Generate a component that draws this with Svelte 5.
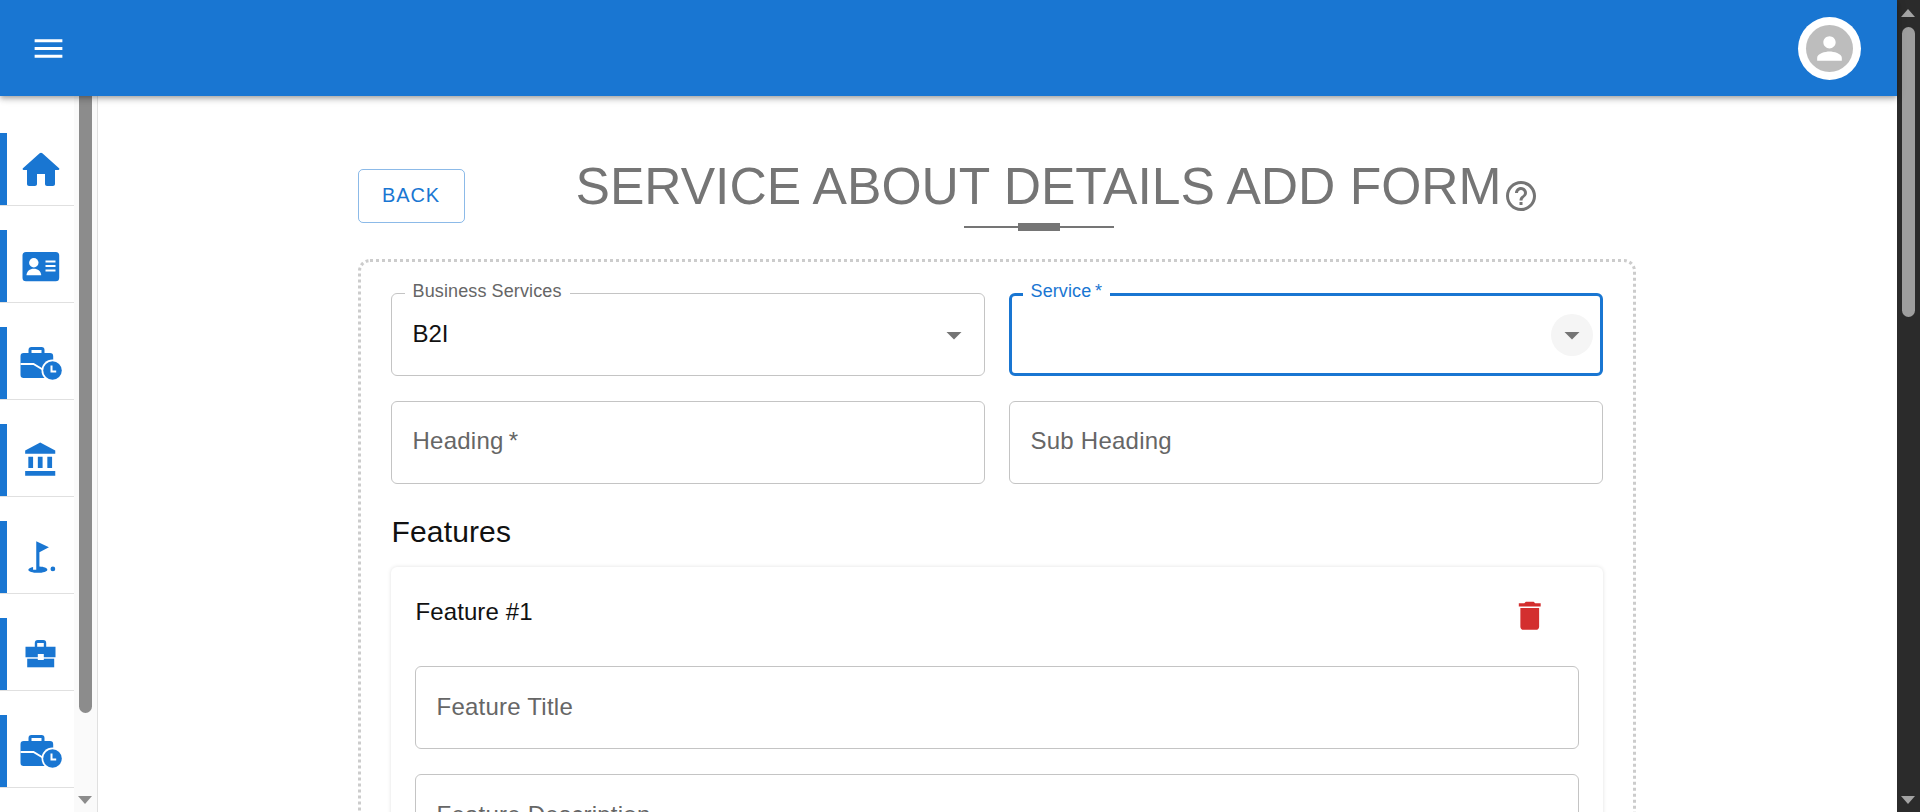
<script>
  const navIcons = ['home', 'card', 'clockcase', 'bank', 'golf', 'case', 'clockcase'];
</script>

<div class="page">
  <div class="viewport">
    <header class="appbar">
      <svg class="menu" viewBox="0 0 24 24"><path d="M3 18h18v-2H3v2zm0-5h18v-2H3v2zm0-7v2h18V6H3z" /></svg>
      <div class="avatar-ring">
        <div class="avatar">
          <svg viewBox="0 0 24 24"><path d="M12 12c2.21 0 4-1.79 4-4s-1.79-4-4-4-4 1.79-4 4 1.79 4 4 4zm0 2c-2.67 0-8 1.34-8 4v2h16v-2c0-2.66-5.33-4-8-4z" /></svg>
        </div>
      </div>
    </header>

    <div class="body">
      <aside class="sidebar">
        <nav class="nav">
          {#each navIcons as icon}
            <div class="nav-item">
              <div class="nav-icon">
                {#if icon === 'home'}
                  <svg class="s48 home" viewBox="0 0 24 24"><path d="M10 19v-5h4v5c0 .55.45 1 1 1h3c.55 0 1-.45 1-1v-7h1.7c.46 0 .68-.57.33-.87L12.67 3.6c-.38-.34-.96-.34-1.34 0l-8.36 7.53c-.34.3-.13.87.33.87H5v7c0 .55.45 1 1 1h3c.55 0 1-.45 1-1z" /></svg>
                {:else if icon === 'card'}
                  <svg class="s48" viewBox="0.5 0 48 48"><path d="M9.5 10h29.7a3.500 3.500 0 0 1 3.500 3.500v22.300a3.500 3.500 0 0 1-3.500 3.500H9.500A3.500 3.500 0 0 1 6 35.800V13.500A3.500 3.500 0 0 1 9.500 10z" /><circle cx="17.300" cy="20.700" r="4.700" fill="#fff" /><path fill="#fff" d="M10 33.200c0-3.800 3.300-6.500 7.300-6.500s7.400 2.700 7.400 6.500z" /><path fill="#fff" d="M29 18.500h10v2H29zM29 23h10v2H29zM29 27.500h10v2H29z" /></svg>
                {:else if icon === 'clockcase'}
                  <svg class="s48" viewBox="0.5 0 48 48"><path fill-rule="evenodd" d="M12 14v-3a3 3 0 0 1 3-3h10a3 3 0 0 1 3 3v3h5.500a3.200 3.200 0 0 1 3.200 3.200V39H7.200A3.200 3.200 0 0 1 4 35.800V17.200A3.200 3.200 0 0 1 7.200 14zM15 11v3h10v-3z" /><path fill="none" stroke="#fff" stroke-width="2" d="M4 25h13l10 6" /><circle cx="36" cy="31.500" r="11" fill="#fff" /><circle cx="36" cy="31.500" r="9.300" /><path fill="none" stroke="#fff" stroke-width="2" d="M35 26.500v6h4.700" /></svg>
                {:else if icon === 'bank'}
                  <svg class="s38" viewBox="0 0 24 24"><path d="M4 10v7h3v-7H4zm6 0v7h3v-7h-3zM2 22h19v-3H2v3zm14-12v7h3v-7h-3zm-4.500-9L2 6v2h19V6l-9.500-5z" /></svg>
                {:else if icon === 'golf'}
                  <svg class="s38" viewBox="0 0 24 24"><circle cx="19.500" cy="19.500" r="1.500" /><path d="M17 5.920 9 2v18H7v-1.730c-1.790.350-3 .990-3 1.730 0 1.100 2.690 2 6 2s6-.900 6-2c0-.990-2.160-1.810-5-1.970V8.980l6-3.060z" /></svg>
                {:else}
                  <svg class="s48" viewBox="0.5 0 48 48"><path fill-rule="evenodd" d="M18.300 16.700V13a3 3 0 0 1 3-3h5.400a3 3 0 0 1 3 3v3.700H39v10.600H9V16.700zM20.700 16.700h6.600V13h-6.600z" /><path d="M10.700 28.700h27v8.600h-27z" /><path fill="#fff" d="M21.300 24h6v6h-6z" /></svg>
                {/if}
              </div>
            </div>
          {/each}
        </nav>
        <div class="side-scroll">
          <div class="side-thumb"></div>
          <div class="arrow-down side-arrow"></div>
        </div>
      </aside>

      <main class="main">
        <div class="column">
          <div class="title-row">
            <button class="back">BACK</button>
            <div class="title-block">
              <h1>SERVICE ABOUT DETAILS ADD FORM</h1>
              <div class="rule"><span></span></div>
            </div>
            <svg class="help" viewBox="0 0 24 24"><path d="M11 18h2v-2h-2v2zm1-16C6.480 2 2 6.480 2 12s4.480 10 10 10 10-4.480 10-10S17.520 2 12 2zm0 18c-4.410 0-8-3.590-8-8s3.590-8 8-8 8 3.590 8 8-3.590 8-8 8zm0-14c-2.210 0-4 1.790-4 4h2c0-1.100.900-2 2-2s2 .900 2 2c0 2-3 1.750-3 5h2c0-2.250 3-2.500 3-5 0-2.210-1.790-4-4-4z" /></svg>
          </div>

          <section class="form">
            <div class="grid">
              <div class="field">
                <span class="label small">Business Services</span>
                <span class="value">B2I</span>
                <svg class="drop" viewBox="0 0 24 24"><path d="M7 10l5 5 5-5z" /></svg>
              </div>
              <div class="field focus">
                <span class="label small">Service&thinsp;*</span>
                <span class="pop"><svg class="drop-inner" viewBox="0 0 24 24"><path d="M7 10l5 5 5-5z" /></svg></span>
              </div>
              <div class="field"><span class="label raised">Heading&thinsp;*</span></div>
              <div class="field"><span class="label raised">Sub Heading</span></div>
            </div>

            <h2>Features</h2>

            <div class="card">
              <div class="card-head">
                <span class="card-title">Feature #1</span>
                <svg class="trash" viewBox="0 0 24 24"><path d="M6 19c0 1.100.900 2 2 2h8c1.100 0 2-.900 2-2V7H6v12zM19 4h-3.500l-1-1h-5l-1 1H5v2h14V4z" /></svg>
              </div>
              <div class="field"><span class="label">Feature Title</span></div>
              <div class="field tall"><span class="label">Feature Description</span></div>
            </div>
          </section>
        </div>
      </main>
    </div>
  </div>

  <div class="page-scroll">
    <div class="arrow-up"></div>
    <div class="page-thumb"></div>
    <div class="arrow-down page-arrow"></div>
  </div>
</div>

<style>
  :global(body) {
    margin: 0;
    background: #fff;
    font-family: "Liberation Sans", Arial, sans-serif;
  }
  .page {
    display: flex;
    height: 812px;
    overflow: hidden;
  }
  .viewport {
    flex: 1;
    min-width: 0;
    display: flex;
    flex-direction: column;
  }
  .appbar {
    position: relative;
    z-index: 2;
    flex: none;
    height: 96px;
    background: #1976d2;
    display: flex;
    align-items: center;
    justify-content: space-between;
    padding: 0 36px 0 30px;
    box-shadow: 0 2px 4px -1px rgba(0,0,0,.2), 0 4px 5px rgba(0,0,0,.14), 0 1px 10px rgba(0,0,0,.12);
  }
  .menu {
    width: 37px;
    height: 37px;
    fill: #fff;
  }
  .avatar-ring {
    width: 47px;
    height: 47px;
    padding: 8px;
    border-radius: 50%;
    background: #fff;
  }
  .avatar {
    width: 47px;
    height: 47px;
    border-radius: 50%;
    background: #bdbdbd;
    display: flex;
    align-items: center;
    justify-content: center;
  }
  .avatar svg {
    width: 37px;
    height: 37px;
    fill: #fff;
  }
  .body {
    flex: 1;
    min-height: 0;
    display: flex;
  }
  .sidebar {
    flex: none;
    width: 97px;
    display: flex;
    border-right: 1px solid #e0e0e0;
  }
  .nav {
    width: 74px;
    padding-top: 37px;
  }
  .nav-item {
    height: 72px;
    margin-bottom: 24px;
    border-bottom: 1px solid #e0e0e0;
  }
  .nav-icon {
    height: 72px;
    border-left: 7px solid #1976d2;
    display: flex;
    align-items: center;
    justify-content: center;
    box-sizing: border-box;
  }
  .nav-icon svg {
    fill: #1976d2;
  }
  .s48 {
    width: 48px;
    height: 48px;
  }
  .home {
    margin-top: 1px;
  }
  .s38 {
    width: 38px;
    height: 38px;
  }
  .side-scroll {
    position: relative;
    width: 23px;
    background: #fafafa;
  }
  .side-thumb {
    position: absolute;
    left: 5px;
    top: 0;
    width: 13px;
    height: 617px;
    background: #8c8c8c;
    border-radius: 0 0 7px 7px;
  }
  .arrow-down {
    position: absolute;
    width: 0;
    height: 0;
    border-left: 7.5px solid transparent;
    border-right: 7.500px solid transparent;
  }
  .side-arrow {
    left: 4px;
    top: 700px;
    border-top: 8px solid #8c8c8c;
  }
  .main {
    flex: 1;
    min-width: 0;
    padding-right: 2px;
  }
  .column {
    width: 1278px;
    margin: 0 auto;
    padding-top: 64px;
  }
  .title-row {
    display: flex;
    align-items: flex-start;
    height: 99px;
  }
  .back {
    margin-top: 9px;
    width: 107px;
    height: 54px;
    border: 1px solid rgba(25,118,210,.5);
    border-radius: 5px;
    background: none;
    color: #1976d2;
    font: 20px "Liberation Sans", Arial, sans-serif;
    letter-spacing: .85px;
    padding: 0 0 2px;
  }
  .title-block {
    margin-left: 111px;
    display: flex;
    flex-direction: column;
    align-items: center;
  }
  h1 {
    margin: -4px 0 0;
    font-size: 51.600px;
    line-height: 60px;
    font-weight: 400;
    color: #757575;
    white-space: nowrap;
  }
  .rule {
    position: relative;
    margin-top: 10px;
    width: 150px;
    height: 2px;
    background: #757575;
  }
  .rule span {
    position: absolute;
    left: 54px;
    top: -3px;
    width: 42px;
    height: 8px;
    background: #757575;
  }
  .help {
    width: 36px;
    height: 36px;
    margin: 18px 0 0 1px;
    fill: #757575;
  }
  .form {
    border: 3px dotted #ccc;
    border-radius: 12px;
    padding: 31px 30px 0;
    height: 700px;
    box-sizing: border-box;
  }
  .grid {
    display: grid;
    grid-template-columns: 594px 594px;
    column-gap: 24px;
    row-gap: 25px;
  }
  .field {
    position: relative;
    height: 83px;
    box-sizing: border-box;
    border: 1px solid #c4c4c4;
    border-radius: 6px;
    background: #fff;
  }
  .focus {
    border: 3px solid #1976d2;
  }
  .label {
    position: absolute;
    left: 21px;
    top: 26px;
    font-size: 24px;
    line-height: 28px;
    letter-spacing: .24px;
    color: #666;
    white-space: nowrap;
  }
  .raised {
    top: 25px;
  }
  .small {
    left: 13px;
    top: -13.500px;
    padding: 0 8px;
    background: #fff;
    font-size: 18px;
    line-height: 20px;
    letter-spacing: .12px;
  }
  .focus .small {
    left: 11px;
    top: -15.500px;
    color: #1976d2;
  }
  .value {
    position: absolute;
    left: 21px;
    top: 26px;
    font-size: 24px;
    line-height: 28px;
    color: #111;
  }
  .drop {
    position: absolute;
    right: 12px;
    top: 23px;
    width: 36px;
    height: 36px;
    fill: #757575;
  }
  .pop {
    position: absolute;
    right: 7px;
    top: 18px;
    width: 42px;
    height: 42px;
    border-radius: 50%;
    background: #f5f5f5;
    display: flex;
    align-items: center;
    justify-content: center;
  }
  .drop-inner {
    width: 36px;
    height: 36px;
    fill: #757575;
  }
  h2 {
    margin: 0 0 0 1px;
    padding-top: 30px;
    height: 53px;
    font-size: 30px;
    line-height: 36px;
    font-weight: 400;
    letter-spacing: .15px;
    color: #111;
  }
  .card {
    padding: 0 24px;
    border-radius: 6px;
    box-shadow: 0 0 4px rgba(0,0,0,.12);
    height: 400px;
    background: #fff;
  }
  .card-head {
    height: 99px;
    display: flex;
    justify-content: space-between;
    align-items: flex-start;
  }
  .card-title {
    margin: 31px 0 0 1px;
    font-size: 24px;
    line-height: 28px;
    letter-spacing: .1px;
    color: #111;
  }
  .trash {
    width: 37.500px;
    height: 37.500px;
    margin: 30px 30px 0 0;
    fill: #d32f2f;
  }
  .tall {
    margin-top: 25px;
    height: 120px;
  }
  .page-scroll {
    position: relative;
    flex: none;
    width: 23px;
    background: #2b2b2b;
  }
  .page-thumb {
    position: absolute;
    left: 5px;
    top: 27px;
    width: 13px;
    height: 290px;
    border-radius: 7px;
    background: #9e9e9e;
  }
  .arrow-up {
    position: absolute;
    left: 4px;
    top: 9px;
    width: 0;
    height: 0;
    border-left: 7.500px solid transparent;
    border-right: 7.500px solid transparent;
    border-bottom: 8px solid #a3a3a3;
  }
  .page-arrow {
    left: 4px;
    top: 796px;
    border-top: 8px solid #a3a3a3;
  }
</style>
